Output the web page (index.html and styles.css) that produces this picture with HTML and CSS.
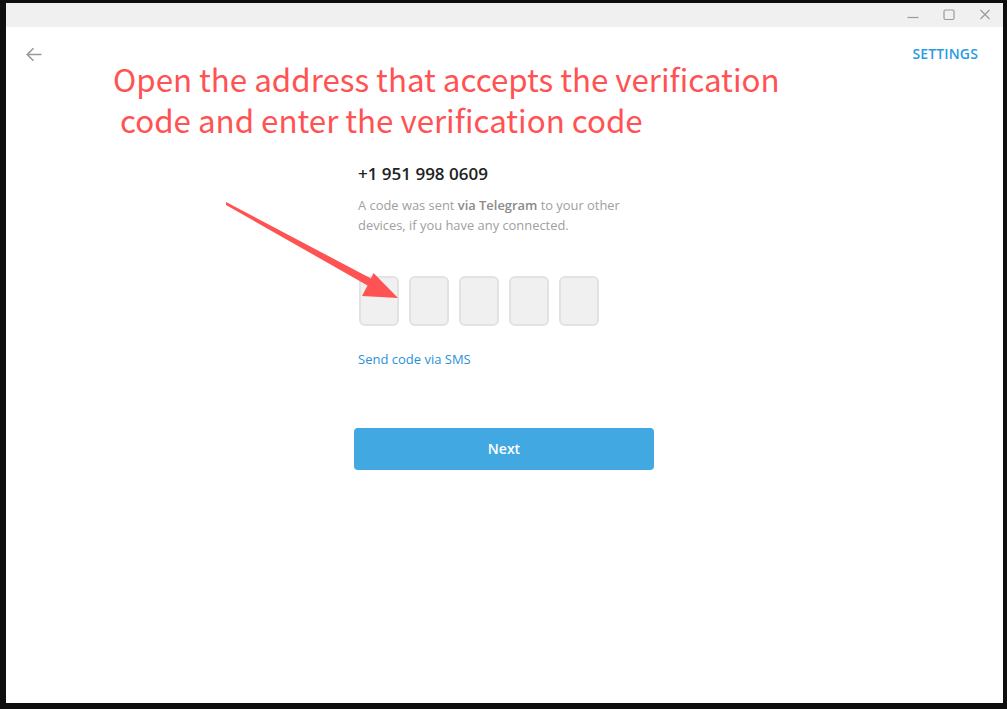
FILE: index.html
```html
<!DOCTYPE html>
<html>
<head>
<meta charset="utf-8">
<link rel="stylesheet" href="styles.css">
</head>
<body>
<div class="window">
  <div class="titlebar">
    <span class="tb-btn">
      <svg width="12" height="12" viewBox="0 0 12 12"><path d="M0.5 8.5H11.5" stroke="#9a9a9a" stroke-width="1.2" fill="none"/></svg>
    </span>
    <span class="tb-btn">
      <svg width="12" height="12" viewBox="0 0 12 12"><rect x="1" y="1" width="10" height="9.5" rx="1.5" stroke="#9a9a9a" stroke-width="1.2" fill="none"/></svg>
    </span>
    <span class="tb-btn">
      <svg width="12" height="12" viewBox="0 0 12 12"><path d="M1.5 1L10.5 10M10.5 1L1.5 10" stroke="#9a9a9a" stroke-width="1.2" fill="none"/></svg>
    </span>
  </div>
  <div class="content">
    <div class="topbar">
      <svg class="back" width="16" height="15" viewBox="0 0 16 15"><path d="M15.5 7.5H1.5M7.5 1.2L1.2 7.5L7.5 13.8" stroke="#9a9a9a" stroke-width="1.6" fill="none"/></svg>
      <span class="settings">SETTINGS</span>
    </div>
    <div class="column">
      <div class="phone">+1 951 998 0609</div>
      <div class="desc">A code was sent <b>via Telegram</b> to your other<br>devices, if you have any connected.</div>
      <div class="codes">
        <span class="cell"></span><span class="cell"></span><span class="cell"></span><span class="cell"></span><span class="cell"></span>
      </div>
      <div class="sms">Send code via SMS</div>
      <div class="next">Next</div>
    </div>
  </div>
</div>
<div class="note">Open the address that accepts the verification<br>&nbsp;code and enter the verification code</div>
<svg class="arrow" width="1007" height="709" viewBox="0 0 1007 709">
  <polygon points="226,202 371,278.5 373.5,273 398,298 362,296 367.5,285.5 226,205" fill="#ff5252"/>
</svg>
</body>
</html>
```
FILE: styles.css
```css
html, body {
  margin: 0;
  padding: 0;
  width: 1007px;
  height: 709px;
  overflow: hidden;
  background: #0e0e0e;
  font-family: "Open Sans", "Noto Sans", sans-serif;
}
.window {
  position: absolute;
  left: 6px;
  top: 3px;
  width: 997px;
  height: 700px;
  background: #ffffff;
  display: flex;
  flex-direction: column;
}
.titlebar {
  height: 24px;
  background: #f0f0f0;
  display: flex;
  justify-content: flex-end;
  align-items: center;
  padding-right: 12px;
  gap: 24px;
}
.tb-btn {
  width: 12px;
  height: 12px;
  display: flex;
}
.content {
  flex: 1;
  display: flex;
  flex-direction: column;
}
.topbar {
  height: 56px;
  display: flex;
  justify-content: space-between;
  align-items: flex-start;
  padding: 20px 25px 0 20px;
  box-sizing: border-box;
}
.back {
  display: block;
}
.settings {
  color: #2a9be3;
  font-size: 14px;
  font-weight: 600;
  line-height: 14px;
  margin-top: 0;
  letter-spacing: 0.15px;
}
.column {
  width: 300px;
  margin: 81px 0 0 348px;
  display: flex;
  flex-direction: column;
}
.phone {
  padding-left: 4px;
  font-size: 17px;
  font-weight: 600;
  line-height: 20px;
  color: #222222;
}
.desc {
  margin-top: 11px;
  padding-left: 4px;
  font-size: 12.9px;
  line-height: 20px;
  color: #a0a0a0;
}
.desc b {
  font-weight: 600;
  color: #8a8a8a;
}
.codes {
  margin-top: 41px;
  padding-left: 5px;
  display: flex;
  gap: 10px;
}
.cell {
  width: 40px;
  height: 50px;
  box-sizing: border-box;
  border: 2px solid #e2e2e2;
  border-radius: 6px;
  background: #f0f0f0;
}
.sms {
  margin-top: 23px;
  padding-left: 4px;
  font-size: 13px;
  line-height: 20px;
  color: #2a90d8;
}
.next {
  margin-top: 59px;
  height: 42px;
  border-radius: 4px;
  background: #41a8e2;
  color: #ffffff;
  font-size: 14px;
  font-weight: 600;
  display: flex;
  align-items: center;
  justify-content: center;
  padding-bottom: 1px;
  box-sizing: border-box;
}
.note {
  position: absolute;
  left: 113px;
  top: 58px;
  color: #ff5252;
  font-family: "Noto Sans CJK SC", "Noto Sans", sans-serif;
  font-size: 31.3px;
  line-height: 41px;
  white-space: nowrap;
}
.arrow {
  position: absolute;
  left: 0;
  top: 0;
  pointer-events: none;
}
```
